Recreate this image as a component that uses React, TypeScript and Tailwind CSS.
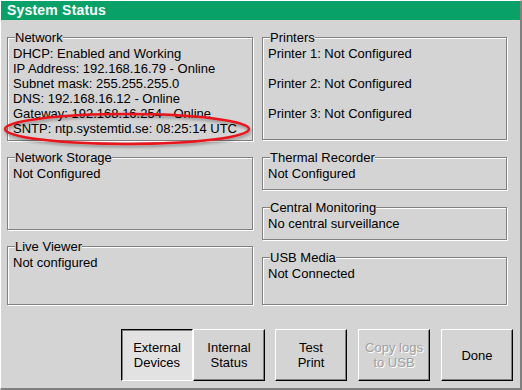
import React from "react";

const font = "font-['Liberation_Sans',Arial,sans-serif]";

function Group({
  title,
  className,
  children,
}: {
  title: string;
  className: string;
  children: React.ReactNode;
}) {
  return (
    <fieldset
      className={`${className} border border-[#808080] shadow-[1px_1px_0_#fff,inset_1px_1px_0_#fff] px-[5px]`}
    >
      <legend className="ml-[2px] px-0 bg-[#d4d4d4] leading-[15px]">{title}</legend>
      <div className="pt-[1px] leading-[15px]">{children}</div>
    </fieldset>
  );
}

function Btn({
  label,
  pressed,
  disabled,
}: {
  label: React.ReactNode;
  pressed?: boolean;
  disabled?: boolean;
}) {
  const edge = pressed
    ? "border-t-black border-l-black border-b-white border-r-white bg-[#e2e2e2] shadow-[inset_1px_1px_0_#808080]"
    : "border-t-white border-l-white border-b-black border-r-black bg-[#d4d4d4] shadow-[inset_-1px_-1px_0_#808080]";
  return (
    <button
      className={`w-[72px] h-[52px] border flex items-center justify-center text-center leading-[15px] ${edge} ${
        disabled ? "text-[#a0a0a0] [text-shadow:1px_1px_0_#fff]" : "text-black"
      }`}
    >
      {label}
    </button>
  );
}

export default function App() {
  return (
    <div
      className={`${font} relative w-[522px] h-[390px] flex flex-col bg-[#d4d4d4] text-[13px] text-black border-t border-l border-t-white border-l-white border-r-2 border-b-2 border-r-[#808080] border-b-[#808080]`}
    >
      {/* title bar */}
      <div className="h-[19px] bg-[#08a268] text-white font-bold text-[14px] tracking-[0.2px] leading-[19px] px-[6px]">
        System Status
      </div>

      <div className="flex gap-[9px] pl-[6px] pt-[10px]">
        <div className="w-[246px] flex flex-col gap-[9px]">
          <Group title="Network" className="h-[111px]">
            <div>DHCP: Enabled and Working</div>
            <div>IP Address: 192.168.16.79 - Online</div>
            <div>Subnet mask: 255.255.255.0</div>
            <div>DNS: 192.168.16.12 - Online</div>
            <div>Gateway: 192.168.16.254 - Online</div>
            <div>SNTP: ntp.systemtid.se: 08:25:14 UTC</div>
          </Group>
          <Group title="Network Storage" className="h-[80px]">
            Not Configured
          </Group>
          <Group title="Live Viewer" className="h-[66px]">
            Not configured
          </Group>
        </div>

        <div className="w-[245px] flex flex-col gap-[10px]">
          <Group title="Printers" className="h-[110px]">
            <div className="flex flex-col gap-[15px]">
              <div>Printer 1: Not Configured</div>
              <div>Printer 2: Not Configured</div>
              <div>Printer 3: Not Configured</div>
            </div>
          </Group>
          <Group title="Thermal Recorder" className="h-[40px]">
            Not Configured
          </Group>
          <Group title="Central Monitoring" className="h-[40px]">
            No central surveillance
          </Group>
          <Group title="USB Media" className="h-[55px]">
            Not Connected
          </Group>
        </div>
      </div>

      {/* buttons */}
      <div className="mt-auto flex justify-end pr-[7px] pb-[7px]">
        <Btn pressed label={<>External<br />Devices</>} />
        <Btn label={<>Internal<br />Status</>} />
        <div className="ml-[10px]">
          <Btn label={<>Test<br />Print</>} />
        </div>
        <div className="ml-[11px]">
          <Btn disabled label={<>Copy logs<br />to USB</>} />
        </div>
        <div className="ml-[11px]">
          <Btn label="Done" />
        </div>
      </div>

      {/* red annotation ring */}
      <svg className="absolute left-0 top-0 pointer-events-none" width="260" height="160">
        <defs>
          <filter id="sh" x="-10%" y="-50%" width="120%" height="200%">
            <feDropShadow dx="1" dy="2" stdDeviation="1.5" floodColor="#000" floodOpacity="0.35" />
          </filter>
        </defs>
        <ellipse
          cx="126"
          cy="128"
          rx="122"
          ry="15"
          fill="none"
          stroke="#e8141b"
          strokeWidth="2.5"
          filter="url(#sh)"
        />
      </svg>
    </div>
  );
}
